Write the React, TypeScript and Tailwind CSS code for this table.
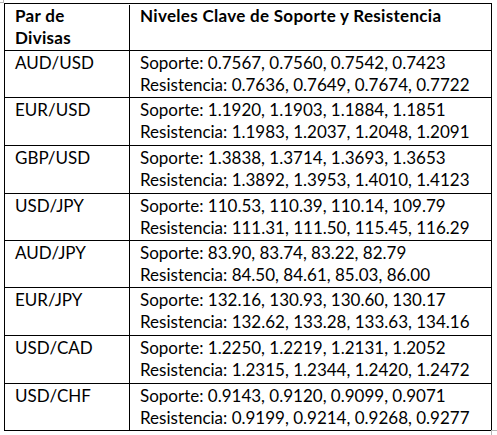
import React from "react";

type Row = {
  pair: string;
  soporte: string;
  resistencia: string;
};

const rows: Row[] = [
  { pair: "AUD/USD", soporte: "0.7567, 0.7560, 0.7542, 0.7423", resistencia: "0.7636, 0.7649, 0.7674, 0.7722" },
  { pair: "EUR/USD", soporte: "1.1920, 1.1903, 1.1884, 1.1851", resistencia: "1.1983, 1.2037, 1.2048, 1.2091" },
  { pair: "GBP/USD", soporte: "1.3838, 1.3714, 1.3693, 1.3653", resistencia: "1.3892, 1.3953, 1.4010, 1.4123" },
  { pair: "USD/JPY", soporte: "110.53, 110.39, 110.14, 109.79", resistencia: "111.31, 111.50, 115.45, 116.29" },
  { pair: "AUD/JPY", soporte: "83.90, 83.74, 83.22, 82.79", resistencia: "84.50, 84.61, 85.03, 86.00" },
  { pair: "EUR/JPY", soporte: "132.16, 130.93, 130.60, 130.17", resistencia: "132.62, 133.28, 133.63, 134.16" },
  { pair: "USD/CAD", soporte: "1.2250, 1.2219, 1.2131, 1.2052", resistencia: "1.2315, 1.2344, 1.2420, 1.2472" },
  { pair: "USD/CHF", soporte: "0.9143, 0.9120, 0.9099, 0.9071", resistencia: "0.9199, 0.9214, 0.9268, 0.9277" },
];

// row heights incl. the top border line, taken off the screenshot
const tall = [false, true, true, false, false, true, true, false];

const App = () => {
  return (
    <div className="relative h-[435px] w-[497px] bg-white font-['Lato',sans-serif] text-[17px] leading-[22px] text-black">
      {/* word table handles */}
      <div className="absolute left-0 top-0 h-[3px] w-[4px] border-b border-r border-[#b5b5b5]" />
      <div className="absolute left-[491px] top-[430px] h-[5px] w-[6px] border-l border-t border-[#b5b5b5]" />

      <div className="pl-[4px] pt-[3px]">
        <div className="w-[488px] border border-black">
          <div className="flex h-[46px] pt-[1px] font-bold tracking-[0.3px]">
            <div className="w-[125px] shrink-0 border-r border-black px-[10px]">
              Par de
              <br />
              Divisas
            </div>
            <div className="flex-1 px-[10px]">Niveles Clave de Soporte y Resistencia</div>
          </div>
          {rows.map((r, i) => (
            <div key={r.pair} className={`flex border-t border-black ${tall[i] ? "h-[48px]" : "h-[47px]"}`}>
              <div className="w-[125px] shrink-0 border-r border-black px-[10px] pt-[1px]">{r.pair}</div>
              <div className="flex-1 px-[10px] pt-[1px] whitespace-nowrap">
                <div>Soporte: {r.soporte}</div>
                <div>Resistencia: {r.resistencia}</div>
              </div>
            </div>
          ))}
        </div>
      </div>
    </div>
  );
};

export default App;
